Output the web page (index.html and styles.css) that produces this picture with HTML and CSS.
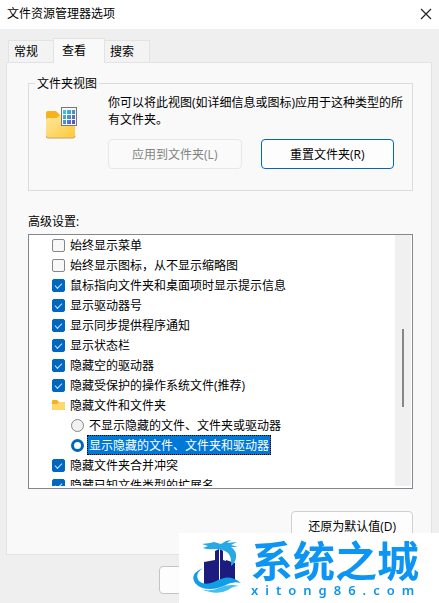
FILE: index.html
```html
<!DOCTYPE html>
<html lang="zh-CN">
<head>
    <meta charset="UTF-8">
    <meta name="viewport" content="width=device-width, initial-scale=1.0">
    <title>文件资源管理器选项</title>
    <link rel="stylesheet" href="styles.css">
</head>
<body>
    <!-- Title bar -->
    <header class="titlebar">
        <h1>文件资源管理器选项</h1>
        <button class="close" type="button" aria-label="关闭">
            <svg width="12" height="12" viewBox="0 0 12 12"><path d="M1 1l10 10M11 1L1 11" stroke="#222" stroke-width="1.2" fill="none"/></svg>
        </button>
    </header>

    <main class="dialog">
        <div class="tabs" role="tablist">
            <button class="tab" type="button" role="tab">常规</button>
            <button class="tab active" type="button" role="tab" aria-selected="true">查看</button>
            <button class="tab" type="button" role="tab">搜索</button>
        </div>

        <section class="panel">
            <!-- Folder views -->
            <fieldset class="views">
                <legend>文件夹视图</legend>
                <div class="views-body">
                    <svg class="views-icon" width="32" height="32" viewBox="0 0 32 32">
                        <defs>
                            <linearGradient id="front" x1="0" y1="0" x2="1" y2="1">
                                <stop offset="0" stop-color="#ffe7a2"/>
                                <stop offset="1" stop-color="#ffc937"/>
                            </linearGradient>
                            <linearGradient id="tiles" x1="0" y1="0" x2="1" y2="1">
                                <stop offset="0" stop-color="#3fd0dc"/>
                                <stop offset="0.5" stop-color="#4a90c8"/>
                                <stop offset="1" stop-color="#6a3fb0"/>
                            </linearGradient>
                        </defs>
                        <path d="M0 6q0-2 2-2h7q1 0 2 1l3 3h15v22H0z" fill="#f8b21c"/>
                        <path d="M0 13q0-2 2-2h8q1 0 2-1l2-2h13q2 0 2 2v19q0 2-2 2H2q-2 0-2-2z" fill="url(#front)"/>
                        <path d="M0 29q0 2 2 2h25q2 0 2-2" fill="none" stroke="#bfa66a"/>
                        <rect x="15.500" y="0.500" width="15" height="18" fill="#f6f8fa" stroke="#777"/>
                        <path d="M17 3h3v4h-3zM21 3h4v4h-4zM26 3h3v4h-3zM17 8h3v4h-3zM21 8h4v4h-4zM26 8h3v4h-3zM17 13h3v4h-3zM21 13h4v4h-4zM26 13h3v4h-3z" fill="url(#tiles)"/>
                    </svg>
                    <div class="views-text">
                        <p>你可以将此视图(如详细信息或图标)应用于这种类型的所有文件夹。</p>
                        <div class="views-buttons">
                            <button class="btn" type="button" disabled>应用到文件夹(L)</button>
                            <button class="btn primary" type="button">重置文件夹(R)</button>
                        </div>
                    </div>
                </div>
            </fieldset>

            <!-- Advanced settings -->
            <h2 id="advanced">高级设置:</h2>
            <div class="list-box">
                <ul class="list" aria-labelledby="advanced">
                    <li><label><input type="checkbox"><span>始终显示菜单</span></label></li>
                    <li><label><input type="checkbox"><span>始终显示图标，从不显示缩略图</span></label></li>
                    <li><label><input type="checkbox" checked><span>鼠标指向文件夹和桌面项时显示提示信息</span></label></li>
                    <li><label><input type="checkbox" checked><span>显示驱动器号</span></label></li>
                    <li><label><input type="checkbox" checked><span>显示同步提供程序通知</span></label></li>
                    <li><label><input type="checkbox" checked><span>显示状态栏</span></label></li>
                    <li><label><input type="checkbox" checked><span>隐藏空的驱动器</span></label></li>
                    <li><label><input type="checkbox" checked><span>隐藏受保护的操作系统文件(推荐)</span></label></li>
                    <li class="group">
                        <svg width="13" height="12" viewBox="0 0 13 12">
                            <path d="M0 2q0-1 1-1h4l2 2h5q1 0 1 1v7H0z" fill="#f5b01d"/>
                            <path d="M0 5h5l2-2h5q1 0 1 1v6q0 1-1 1H1q-1 0-1-1z" fill="#ffd76a"/>
                        </svg>
                        <span>隐藏文件和文件夹</span>
                    </li>
                    <li class="nested"><label><input type="radio" name="hidden"><span>不显示隐藏的文件、文件夹或驱动器</span></label></li>
                    <li class="nested"><label><input type="radio" name="hidden" checked><span class="selected">显示隐藏的文件、文件夹和驱动器</span></label></li>
                    <li><label><input type="checkbox" checked><span>隐藏文件夹合并冲突</span></label></li>
                    <li><label><input type="checkbox" checked><span>隐藏已知文件类型的扩展名</span></label></li>
                </ul>
                <div class="scrollbar"><div class="thumb"></div></div>
            </div>

            <div class="restore">
                <button class="btn" type="button">还原为默认值(D)</button>
            </div>
        </section>

        <footer class="actions">
            <button class="btn" type="button" aria-label="确定"></button>
            <button class="btn" type="button" aria-label="取消"></button>
            <button class="btn" type="button" aria-label="应用"></button>
        </footer>
    </main>

    <!-- Site watermark -->
    <aside class="watermark">
        <svg width="50" height="60" viewBox="0 0 50 60">
            <path d="M12 24l11-2v-9l4-2v36l-15 3z" fill="#1b1b80"/>
            <path d="M28 11l3 2v9l3 1v-1l9 3v19l-15 2z" fill="#1b1b80"/>
            <path d="M10 6l8-1 4-1 7 2 5-3 5-1-4 3 10-1-6 3 7 2-7 0q6 4 5 11-1 5-5 8 1-9-3-13-5-4-13-4-7 1-12-1l5-2z" fill="#29a8e6"/>
            <path d="M11 30Q2 36 7 43q5 5 15 1 11-6 18-4 6 2 9 5-7-2-13 1-9 5-18 5-10 0-15-6-6-9 8-15z" fill="#109fe6"/>
            <path d="M9 51q9 3 18-1 10-5 20-2-6 0-11 4-11 6-27-1z" fill="#43bdf2"/>
        </svg>
        <div class="brand">
            <strong>系统之城</strong>
            <span>xitong86.com</span>
        </div>
    </aside>
</body>
</html>
```
FILE: styles.css
```css
* {
    margin: 0;
    padding: 0;
    box-sizing: border-box;
}

body {
    background: #efefef;
    color: #000;
    font-family: "Open Sans", "Noto Sans CJK SC", sans-serif;
    font-size: 12px;
    line-height: 17px;
    overflow: hidden;
}

button {
    font: inherit;
    color: inherit;
}

h1, h2 {
    font-size: 12px;
    font-weight: normal;
}

/* Title bar */
.titlebar {
    display: flex;
    justify-content: space-between;
    align-items: center;
    height: 29px;
    padding: 0 7px 2px;
    background: #fff;
}

.close {
    display: flex;
    border: none;
    background: none;
}

.dialog {
    padding: 9px 7px 8px 6px;
}

/* Tabs */
.tabs {
    display: flex;
    align-items: flex-end;
    padding-left: 2px;
}

.tab {
    height: 22px;
    padding: 0 15px 0 5px;
    border: 1px solid #e3e3e3;
    border-bottom: none;
    background: #f3f3f3;
}

.tab.active {
    height: 25px;
    margin: 0 -1px -1px;
    padding: 0 18px 2px 8px;
    background: #f9f9f9;
    z-index: 1;
}

.panel {
    padding: 12px 18px 13px 21px;
    border: 1px solid #e3e3e3;
    background: #f9f9f9;
}

/* Folder views */
.views {
    padding: 0 7px 21px 17px;
    border: 1px solid #dcdcdc;
}

.views legend {
    margin-left: -11px;
    padding: 0 2px;
}

.views-body {
    display: flex;
    gap: 30px;
    padding-top: 2px;
}

.views-icon {
    flex: none;
    margin-top: 13px;
}

.views-text {
    flex: 1;
}

.views-buttons {
    display: flex;
    gap: 19px;
    padding-right: 11px;
    margin-top: 11px;
}

.views-buttons .btn {
    flex: 1;
}

.btn {
    height: 30px;
    border: 1px solid #d0d0d0;
    border-radius: 4px;
    background: #fdfdfd;
}

.btn:disabled {
    border-color: #e8e8e8;
    background: #fafafa;
    color: #838383;
}

.btn.primary {
    border-color: #0067c0;
}

/* Advanced settings */
#advanced {
    margin: 22px 0 4px;
}

.list-box {
    display: flex;
    height: 255px;
    padding: 0 1px 2px 0;
    border: 1px solid #828790;
    background: #fff;
}

.list {
    flex: 1;
    overflow: hidden;
    list-style: none;
}

.list li, .list label {
    display: flex;
    align-items: center;
    height: 20px;
}

.list li {
    padding-left: 23px;
}

.list li.nested {
    padding-left: 42px;
}

.list input {
    flex: none;
    appearance: none;
    width: 13px;
    height: 13px;
    border: 1px solid #868686;
    border-radius: 2px;
    background: #f8f8f8;
}

.list span {
    height: 20px;
    margin-left: 3px;
    padding: 0 1px;
    border: 1px solid transparent;
    line-height: 20px;
}

.list input[type="checkbox"]:checked {
    display: grid;
    place-items: center;
    border-color: #0067c0;
    background: #0067c0;
}

/* tick mark */
.list input[type="checkbox"]:checked::before {
    content: "";
    width: 6px;
    height: 3px;
    border: solid #cfe4f7;
    border-width: 0 0 1px 1px;
    transform: rotate(-45deg);
}

.list input[type="radio"] {
    border-radius: 50%;
    background: #f2f2f2;
}

.list input[type="radio"]:checked {
    border: 3px solid #0067c0;
    background: #fff;
}

.list .selected {
    border: 1px dotted #000;
    background: #0078d7;
    color: #fff;
}

.scrollbar {
    width: 16px;
    padding: 94px 7px 0;
    background: #f0f0f0;
}

.thumb {
    height: 78px;
    background: #868686;
}

.restore {
    display: flex;
    justify-content: flex-end;
    margin-top: 22px;
}

.restore .btn {
    padding: 0 16px;
}

.actions {
    display: flex;
    justify-content: flex-end;
    gap: 9px;
    padding-top: 11px;
}

.actions .btn {
    width: 85px;
    height: 28px;
    border-color: #c4c4c4;
}

/* Watermark */
.watermark {
    position: fixed;
    right: 0;
    bottom: 0;
    z-index: 2;
    display: flex;
    gap: 9px;
    width: 260px;
    height: 70px;
    padding: 5px 0 0 13px;
    background: #fff;
}

.brand {
    display: flex;
    flex-direction: column;
    color: #0c95f2;
}

.brand strong {
    font-family: "Noto Sans CJK SC", sans-serif;
    font-size: 42px;
    font-weight: 700;
    line-height: 42px;
}

/* wide-tracked wordmark */
.brand span {
    margin-top: 3px;
    font-family: "Noto Sans", sans-serif;
    font-size: 13px;
    font-weight: 600;
    line-height: 14px;
    letter-spacing: 7px;
}
```
